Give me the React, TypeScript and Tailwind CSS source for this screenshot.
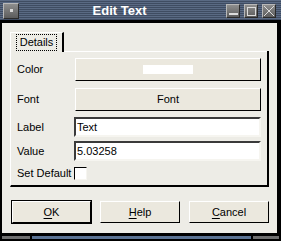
import React from 'react';

// Bevel helpers for the old Motif/Tk-style look
const raised = 'border border-t-white border-l-white border-b-black border-r-black';
const sunken = 'border-2 border-t-[#3a3a3a] border-l-[#3a3a3a] border-b-[#f6f5f0] border-r-[#f6f5f0]';

function TitleButton({ children }: { children?: React.ReactNode }) {
  return (
    <div className="w-[14px] h-[14px] flex items-center justify-center border border-t-[#b8b8b8] border-l-[#b8b8b8] border-b-[#2a2a2a] border-r-[#2a2a2a] bg-[linear-gradient(180deg,#8e8e8e,#5c5c5c)]">
      {children}
    </div>
  );
}

function FieldLabel({ children }: { children: React.ReactNode }) {
  return <span className="w-[57px] shrink-0 text-[11px] leading-none text-black">{children}</span>;
}

function DialogButton({ label, hot, isDefault = false }: { label: string; hot: string; isDefault?: boolean }) {
  const rest = label.slice(hot.length);
  const inner = (
    <div className={`${raised} h-full w-full bg-[#ebe8de] flex items-center justify-center text-[11px] text-black`}>
      <span>
        <span className="underline underline-offset-2">{hot}</span>
        {rest}
      </span>
    </div>
  );
  return isDefault ? (
    <div className="w-[81px] h-[24px] border border-black">{inner}</div>
  ) : (
    <div className="w-[80px] h-[22px] mt-[1px]">{inner}</div>
  );
}

export default function App() {
  return (
    <div className="w-[281px] h-[241px] bg-black flex flex-col font-['Liberation_Sans',Arial,sans-serif] overflow-hidden">
      {/* title bar */}
      <div className="h-[20px] flex items-center bg-[repeating-linear-gradient(180deg,#5a6a84_0px,#5a6a84_1px,#3f4c62_1px,#3f4c62_2px)]">
        <div className="ml-[3px] mt-[1px] w-[16px] h-[16px] flex items-center justify-center border border-t-[#b8b8b8] border-l-[#b8b8b8] border-b-[#2a2a2a] border-r-[#2a2a2a] bg-[linear-gradient(180deg,#8e8e8e,#5c5c5c)]">
          <div className="w-[3px] h-[3px] bg-[#d8d8d8]" />
        </div>
        <div className="flex-1 text-center text-white font-bold text-[13px] leading-none pr-[6px]">Edit Text</div>
        <div className="flex gap-[4px] mr-[5px] mt-[2px]">
          <TitleButton>
            <div className="w-[9px] h-[2px] bg-[#dcdcdc] mt-[6px]" />
          </TitleButton>
          <TitleButton>
            <div className="w-[9px] h-[9px] border border-[#dcdcdc]" />
          </TitleButton>
          <TitleButton>
            <svg width="12" height="12" viewBox="0 0 12 12">
              <path d="M1 1 L11 11 M11 1 L1 11" stroke="#dcdcdc" strokeWidth="1" />
            </svg>
          </TitleButton>
        </div>
      </div>

      {/* window body */}
      <div className="mt-[3px] ml-[2px] mr-[4px] h-[210px] bg-[#edece6] flex flex-col px-[8px] pt-[9px]">
        {/* tab */}
        <div className="w-[54px] h-[20px] border-t border-l border-r-2 border-t-white border-l-white border-r-black flex items-center justify-center">
          <span className="text-[11px] leading-none text-black outline outline-1 outline-dotted outline-black outline-offset-[2px] px-[1px]">
            Details
          </span>
        </div>

        {/* tab panel */}
        <div className="w-[259px] h-[136px] border-l border-b-2 border-r-2 border-l-white border-b-black border-r-black -mt-[1px] relative flex flex-col pl-[6px] pr-[6px] pt-[7px]">
          <div className="absolute top-0 left-[53px] right-0 h-[1px] bg-white" />

          <div className="flex items-center h-[23px]">
            <FieldLabel>Color</FieldLabel>
            <div className={`${raised} ml-[1px] w-[186px] h-[23px] bg-[#ebe8de] flex items-center justify-center`}>
              <div className="w-[50px] h-[9px] bg-white" />
            </div>
          </div>

          <div className="flex items-center h-[23px] mt-[7px]">
            <FieldLabel>Font</FieldLabel>
            <div className={`${raised} ml-[1px] w-[186px] h-[23px] bg-[#ebe8de] flex items-center justify-center text-[11px] text-black`}>
              Font
            </div>
          </div>

          <div className="flex items-center h-[20px] mt-[6px]">
            <FieldLabel>Label</FieldLabel>
            <div className={`${sunken} w-[188px] h-[20px] bg-white flex items-center text-[11px] text-black pl-[1px]`}>Text</div>
          </div>

          <div className="flex items-center h-[20px] mt-[4px]">
            <FieldLabel>Value</FieldLabel>
            <div className={`${sunken} w-[188px] h-[20px] bg-white flex items-center text-[11px] text-black pl-[1px]`}>5.03258</div>
          </div>

          <div className="flex items-center h-[13px] mt-[6px]">
            <FieldLabel>Set Default</FieldLabel>
            <div className="w-[13px] h-[13px] bg-white border border-t-black border-l-black border-b-[#f6f5f0] border-r-[#f6f5f0]" />
          </div>
        </div>

        {/* dialog buttons */}
        <div className="flex items-start mt-[13px] ml-[1px] gap-[8px]">
          <DialogButton label="OK" hot="O" isDefault />
          <DialogButton label="Help" hot="H" />
          <div className="ml-[1px]">
            <DialogButton label="Cancel" hot="C" />
          </div>
        </div>
      </div>

      {/* bottom resize frame */}
      <div className="mt-[3px] h-[3px] flex gap-[2px] px-[2px]">
        <div className="w-[28px] bg-[#6e6e6e]" />
        <div className="flex-1 bg-[#5b7393]" />
        <div className="w-[26px] bg-[#6e6e6e]" />
      </div>
    </div>
  );
}
